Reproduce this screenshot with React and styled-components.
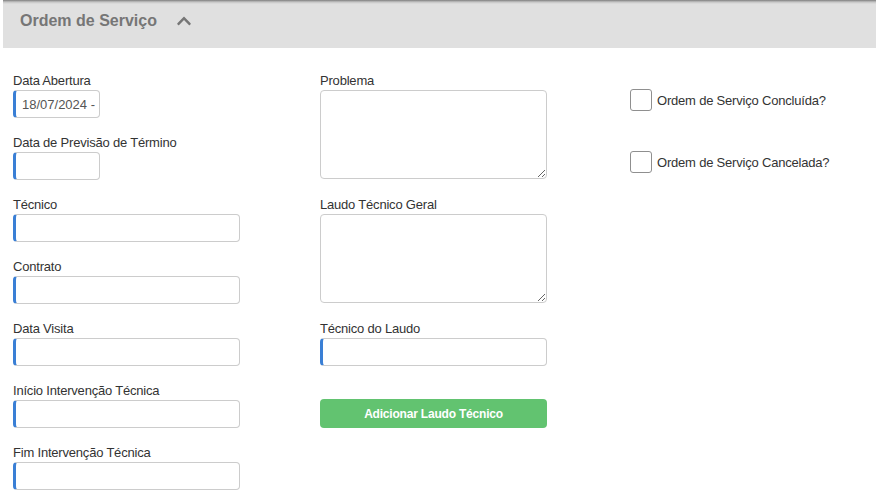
import React from "react";
import styled, { createGlobalStyle } from "styled-components";
import { FaChevronUp } from "react-icons/fa";

const GlobalStyle = createGlobalStyle`
  body {
    margin: 0;
    background: #fff;
    font-family: "Liberation Sans", Arial, sans-serif;
  }
`;

const Page = styled.div`
  padding-left: 3px;
`;

const Header = styled.div`
  height: 48px;
  display: flex;
  align-items: flex-start;
  padding: 11px 0 0 17px;
  box-sizing: border-box;
  background: linear-gradient(#7e7e7e 0, #c4c4c4 2px, #e0e0e0 4px, #e0e0e0 100%);
`;

const Title = styled.h3`
  margin: 0;
  font-size: 16px;
  font-weight: 700;
  color: #767676;
  line-height: 19px;
`;

const Toggle = styled.span`
  margin-left: 19px;
  color: #767676;
  display: flex;
  align-items: center;
  height: 19px;
`;

const Form = styled.div`
  display: grid;
  grid-template-columns: 307px 310px 1fr;
  padding: 24px 0 0 10px;
`;

const Column = styled.div`
  display: flex;
  flex-direction: column;
`;

const Field = styled.div`
  display: flex;
  flex-direction: column;
  margin-bottom: ${(p) => (p.gap === undefined ? 16 : p.gap)}px;
`;

const Label = styled.label`
  font-size: 13px;
  color: #333;
  line-height: 18px;
  height: 18px;
  letter-spacing: -0.2px;
`;

const Input = styled.input`
  box-sizing: border-box;
  width: ${(p) => p.w || 227}px;
  height: 28px;
  border: 1px solid #ccc;
  border-left: 3px solid #3a7fd5;
  border-radius: 4px;
  padding: 0 0 0 6px;
  font-family: inherit;
  font-size: 13px;
  color: #555;
  outline: none;
`;

const TextArea = styled.textarea`
  box-sizing: border-box;
  width: 227px;
  height: 89px;
  border: 1px solid #ccc;
  border-radius: 4px;
  font-family: inherit;
  font-size: 13px;
  margin: 0;
  outline: none;
  display: block;
`;

const Button = styled.button`
  margin-top: 33px;
  width: 227px;
  height: 29px;
  border: none;
  border-radius: 4px;
  background: #62c370;
  color: #fff;
  font-family: inherit;
  font-size: 12px;
  font-weight: 700;
  letter-spacing: -0.2px;
  cursor: pointer;
`;

const CheckRow = styled.label`
  display: flex;
  align-items: center;
  margin-top: ${(p) => p.top || 18}px;
  margin-bottom: 22px;
  height: 22px;
  font-size: 13px;
  color: #333;
  letter-spacing: -0.2px;
  cursor: pointer;
`;

const Box = styled.span`
  box-sizing: border-box;
  width: 22px;
  height: 22px;
  border: 1px solid #8f8f8f;
  border-radius: 3px;
  background: #fff;
  margin-right: 5px;
`;

const leftFields = [
  { label: "Data Abertura", value: "18/07/2024 - 10:32", w: 87 },
  { label: "Data de Previsão de Término", value: "", w: 87 },
  { label: "Técnico" },
  { label: "Contrato" },
  { label: "Data Visita" },
  { label: "Início Intervenção Técnica" },
  { label: "Fim Intervenção Técnica" },
];

function App() {
  return (
    <Page>
      <GlobalStyle />
      <Header>
        <Title>Ordem de Serviço</Title>
        <Toggle>
          <FaChevronUp size={16} />
        </Toggle>
      </Header>
      <Form>
        <Column>
          {leftFields.map((f) => (
            <Field key={f.label}>
              <Label>{f.label}</Label>
              <Input w={f.w} defaultValue={f.value || ""} />
            </Field>
          ))}
        </Column>
        <Column>
          <Field gap={17}>
            <Label>Problema</Label>
            <TextArea />
          </Field>
          <Field gap={17}>
            <Label>Laudo Técnico Geral</Label>
            <TextArea />
          </Field>
          <Field gap={0}>
            <Label>Técnico do Laudo</Label>
            <Input />
          </Field>
          <Button>Adicionar Laudo Técnico</Button>
        </Column>
        <Column>
          <CheckRow top={17}>
            <Box />
            Ordem de Serviço Concluída?
          </CheckRow>
          <CheckRow>
            <Box />
            Ordem de Serviço Cancelada?
          </CheckRow>
        </Column>
      </Form>
    </Page>
  );
}

export default App;
